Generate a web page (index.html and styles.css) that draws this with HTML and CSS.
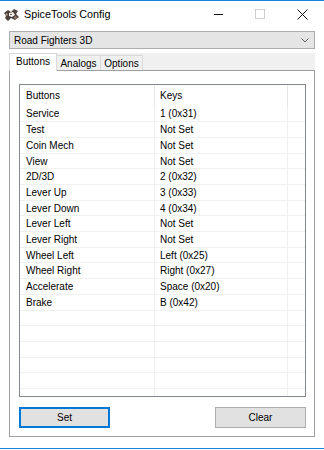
FILE: index.html
```html
<!DOCTYPE html>
<html>
<head>
<meta charset="utf-8">
<link rel="stylesheet" href="styles.css">
</head>
<body>
<div class="window">
  <div class="titlebar">
    <svg class="app-icon" width="15" height="12" viewBox="0 0 15 12">
      <polygon points="0,4 4,1 7,3 10,0 14,2 12,5 15,8 11,11 7,9 4,12 1,9 2,7" fill="#4a403c"/>
      <polygon points="5,4 9,3 11,6 8,8 5,7" fill="#f4f0ec"/>
      <polygon points="1,5 3,4 4,6 2,7" fill="#a89888"/>
      <polygon points="10,8 12,7 13,9 11,10" fill="#9a8070"/>
      <polygon points="6,5 8,5 8,6 6,6" fill="#6a5a50"/>
    </svg>
    <span class="title">SpiceTools Config</span>
    <div class="caption">
      <div class="cap-btn"><span class="min-line"></span></div>
      <div class="cap-btn"><span class="max-box"></span></div>
      <div class="cap-btn">
        <svg width="11" height="11" viewBox="0 0 11 11"><path d="M0.5 0.5 L10.5 10.5 M10.5 0.5 L0.5 10.5" stroke="#111" stroke-width="1"/></svg>
      </div>
    </div>
  </div>

  <div class="content">
    <div class="combo">
      <span class="combo-text">Road Fighters 3D</span>
      <svg class="chev" width="8" height="5" viewBox="0 0 8 5"><path d="M0.5 0.5 L4 4 L7.5 0.5" fill="none" stroke="#606060" stroke-width="1"/></svg>
    </div>

    <div class="tabstrip">
      <div class="tab selected">Buttons</div>
      <div class="tab">Analogs</div>
      <div class="tab">Options</div>
    </div>

    <div class="panel">
      <div class="list">
        <div class="row header">
          <div class="c1">Buttons</div>
          <div class="c2">Keys</div>
          <div class="c3"></div>
        </div>
        <div class="row"><div class="c1">Service</div><div class="c2">1 (0x31)</div><div class="c3"></div></div>
        <div class="row"><div class="c1">Test</div><div class="c2">Not Set</div><div class="c3"></div></div>
        <div class="row"><div class="c1">Coin Mech</div><div class="c2">Not Set</div><div class="c3"></div></div>
        <div class="row"><div class="c1">View</div><div class="c2">Not Set</div><div class="c3"></div></div>
        <div class="row"><div class="c1">2D/3D</div><div class="c2">2 (0x32)</div><div class="c3"></div></div>
        <div class="row"><div class="c1">Lever Up</div><div class="c2">3 (0x33)</div><div class="c3"></div></div>
        <div class="row"><div class="c1">Lever Down</div><div class="c2">4 (0x34)</div><div class="c3"></div></div>
        <div class="row"><div class="c1">Lever Left</div><div class="c2">Not Set</div><div class="c3"></div></div>
        <div class="row"><div class="c1">Lever Right</div><div class="c2">Not Set</div><div class="c3"></div></div>
        <div class="row"><div class="c1">Wheel Left</div><div class="c2">Left (0x25)</div><div class="c3"></div></div>
        <div class="row"><div class="c1">Wheel Right</div><div class="c2">Right (0x27)</div><div class="c3"></div></div>
        <div class="row"><div class="c1">Accelerate</div><div class="c2">Space (0x20)</div><div class="c3"></div></div>
        <div class="row"><div class="c1">Brake</div><div class="c2">B (0x42)</div><div class="c3"></div></div>
        <div class="row"><div class="c1"></div><div class="c2"></div><div class="c3"></div></div>
        <div class="row"><div class="c1"></div><div class="c2"></div><div class="c3"></div></div>
        <div class="row"><div class="c1"></div><div class="c2"></div><div class="c3"></div></div>
        <div class="row"><div class="c1"></div><div class="c2"></div><div class="c3"></div></div>
        <div class="row"><div class="c1"></div><div class="c2"></div><div class="c3"></div></div>
        <div class="row"><div class="c1"></div><div class="c2"></div><div class="c3"></div></div>
      </div>
      <div class="buttons">
        <button class="btn default">Set</button>
        <button class="btn">Clear</button>
      </div>
    </div>
  </div>
</div>
</body>
</html>
```

FILE: styles.css
```css
html, body {
  margin: 0;
  padding: 0;
  background: #ffffff;
}

body {
  width: 324px;
  height: 450px;
  overflow: hidden;
  font-family: "Liberation Sans", Arial, sans-serif;
  font-size: 10px;
  color: #000;
}

.window {
  box-sizing: border-box;
  width: 324px;
  height: 449px;
  border-top: 1px solid #1883d7;
  border-bottom: 1px solid #1883d7;
  background: #ffffff;
}

.titlebar {
  height: 26px;
  display: flex;
  align-items: center;
}

.app-icon {
  margin-left: 4px;
  margin-top: 1px;
  flex: none;
}

.title {
  margin-left: 5px;
  font-size: 10.8px;
  color: #000;
}

.caption {
  margin-left: auto;
  display: flex;
  height: 100%;
  margin-right: 1px;
}

.cap-btn {
  width: 42px;
  height: 100%;
  display: flex;
  align-items: center;
  justify-content: center;
}

.min-line {
  display: block;
  width: 9px;
  height: 1px;
  background: #111;
}

.max-box {
  display: block;
  width: 8px;
  height: 8px;
  border: 1px solid #cfcfcf;
}

.content {
  padding: 4px 9px 0 9px;
}

.combo {
  box-sizing: border-box;
  height: 18px;
  border: 1px solid #adadad;
  background: #e5e5e5;
  display: flex;
  align-items: center;
  padding-left: 4px;
  padding-right: 5px;
}

.combo-text {
  flex: 1;
}

.tabstrip {
  margin-top: 4px;
  height: 17px;
  display: flex;
  align-items: flex-end;
  background: #f0f0f0;
}

.tab {
  box-sizing: border-box;
  height: 15px;
  padding: 0 5px;
  border: 1px solid #d9d9d9;
  border-bottom: none;
  border-left: none;
  background: #f0f0f0;
  display: flex;
  align-items: center;
  justify-content: center;
}

.tab.selected {
  height: 18px;
  width: 48px;
  margin-bottom: -1px;
  border-left: 1px solid #d9d9d9;
  background: #ffffff;
  position: relative;
  z-index: 1;
  padding-bottom: 2px;
}

.tab:nth-child(2) { width: 44px; }
.tab:nth-child(3) { width: 42px; }

.panel {
  box-sizing: border-box;
  height: 367px;
  border: 1px solid #a0a0a0;
  background: #ffffff;
  padding: 13px 8px 0 9px;
}

.list {
  box-sizing: border-box;
  height: 313px;
  border: 1px solid #828790;
  overflow: hidden;
  background: #fff;
}

.row {
  display: flex;
  height: 15.7px;
  box-sizing: border-box;
  border-bottom: 1px solid #f0f0f0;
  align-items: stretch;
}

.row.header {
  height: 21.6px;
  border-bottom: none;
}

.c1, .c2, .c3 {
  box-sizing: border-box;
  display: flex;
  align-items: center;
  white-space: nowrap;
}

.c1 {
  width: 135px;
  padding-left: 6px;
  border-right: 1px solid #f0f0f0;
}

.c2 {
  width: 133px;
  padding-left: 5px;
  border-right: 1px solid #f0f0f0;
}

.c3 {
  flex: 1;
}

.header .c1, .header .c2 {
  border-right-color: #e5e5e5;
}

.buttons {
  display: flex;
  justify-content: space-between;
  margin-top: 10px;
}

.btn {
  box-sizing: border-box;
  width: 91px;
  height: 21px;
  font-family: "Liberation Sans", Arial, sans-serif;
  font-size: 10px;
  color: #000;
  background: #e1e1e1;
  border: 1px solid #adadad;
  padding: 0;
  margin: 0;
}

.btn.default {
  border: 2px solid #0078d7;
}
```
